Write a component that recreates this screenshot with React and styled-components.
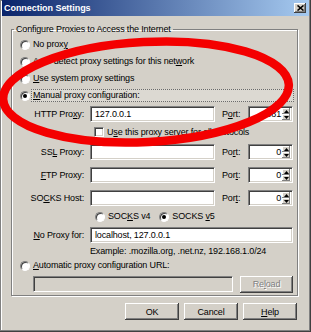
import React from "react";
import styled, { createGlobalStyle } from "styled-components";

const Global = createGlobalStyle`
  html, body { margin: 0; padding: 0; background: #d4d0c8; }
  body {
    font-family: "Liberation Sans", Arial, sans-serif;
    font-size: 9px;
    letter-spacing: -0.15px;
    color: #000;
  }
  * { box-sizing: border-box; }
`;

const Window = styled.div`
  position: relative;
  width: 311px;
  height: 332px;
  background: #d4d0c8;
  display: flex;
  flex-direction: column;
  padding: 0 2px 2px 2px;
  box-shadow: inset -1px -1px 0 #404040, inset -2px -2px 0 #808080,
    inset 1px 1px 0 #808080, inset 2px 2px 0 #ffffff;
  overflow: hidden;
`;

const TitleBar = styled.div`
  height: 16px;
  display: flex;
  align-items: center;
  padding: 0 3px 0 2px;
  background: linear-gradient(to right, #0a246a, #a6caf0);
  color: #fff;
  font-weight: bold;
  letter-spacing: -0.05px;
`;

const Title = styled.span`
  flex: 1;
`;

const CloseBtn = styled.div`
  width: 12px;
  height: 10px;
  background: #d4d0c8;
  display: flex;
  align-items: center;
  justify-content: center;
  box-shadow: inset -1px -1px 0 #404040, inset 1px 1px 0 #ffffff,
    inset -2px -2px 0 #808080;
`;

const Body = styled.div`
  flex: 1;
  display: flex;
  flex-direction: column;
  padding: 8px 11px 0 9px;
`;

const Group = styled.fieldset`
  margin: 0;
  padding: 1px 0 3px 0;
  border: 1px solid #808080;
  box-shadow: 1px 1px 0 #ffffff, inset 1px 1px 0 #ffffff;
  width: 287px;
`;

const Legend = styled.legend`
  margin-left: 2px;
  padding: 0 2px;
  line-height: 11px;
`;

const RadioRow = styled.div`
  display: flex;
  align-items: center;
  height: ${(p) => p.h || 17}px;
  margin-top: ${(p) => p.mt || 0}px;
  padding-left: ${(p) => p.pl ?? 8}px;
`;

const RadioCircle = styled.span`
  position: relative;
  flex: none;
  width: 10px;
  height: 10px;
  border-radius: 50%;
  background: #fff;
  border: 1px solid;
  border-color: #808080 #ffffff #ffffff #808080;
  box-shadow: inset 1px 1px 0 #404040;
  margin-right: 3px;
  margin-left: ${(p) => p.ml || 0}px;
  &::after {
    content: "";
    display: ${(p) => (p.checked ? "block" : "none")};
    position: absolute;
    left: 2px;
    top: 2px;
    width: 4px;
    height: 4px;
    border-radius: 50%;
    background: #000;
  }
`;

const RadioText = styled.span`
  white-space: nowrap;
  line-height: 11px;
  ${(p) =>
    p.focused &&
    `
    flex: 1;
    margin-right: 3px;
    margin-left: -2px;
    padding: 0 1px;
    border: 1px dotted #6b6b6b;
    background: #dcd9d2;
  `}
`;

const Key = styled.span`
  text-decoration: underline;
`;

const FieldRow = styled.div`
  display: flex;
  align-items: center;
  height: 16px;
  margin-top: ${(p) => p.mt || 0}px;
`;

const FieldLabel = styled.span`
  width: 78px;
  flex: none;
  text-align: right;
  padding-right: 6px;
  white-space: nowrap;
`;

const sunken = `
  background: #fff;
  border: 1px solid;
  border-color: #808080 #ffffff #ffffff #808080;
  box-shadow: inset 1px 1px 0 #404040, inset -1px -1px 0 #d4d0c8;
`;

const TextBox = styled.div`
  ${sunken}
  width: ${(p) => p.w}px;
  height: 16px;
  display: flex;
  align-items: center;
  padding: 0 4px;
  white-space: nowrap;
  overflow: hidden;
  ${(p) => p.disabled && `background: #d4d0c8;`}
`;

const PortLabel = styled.span`
  width: 26px;
  margin-left: 7px;
  flex: none;
`;

const PortBox = styled.div`
  ${sunken}
  width: 45px;
  height: 16px;
  display: flex;
  align-items: center;
  padding: 2px 2px 2px 2px;
`;

const PortValue = styled.span`
  flex: 1;
  text-align: right;
  padding-right: 1px;
`;

const Spinner = styled.div`
  width: 8px;
  height: 12px;
  display: flex;
  flex-direction: column;
`;

const SpinBtn = styled.div`
  flex: 1;
  background: #d4d0c8;
  box-shadow: inset -1px -1px 0 #808080, inset 1px 1px 0 #ffffff;
  display: flex;
  align-items: center;
  justify-content: center;
`;

const CheckRow = styled.div`
  display: flex;
  align-items: center;
  height: 20px;
  padding-left: 82px;
`;

const CheckBox = styled.span`
  ${sunken}
  width: 10px;
  height: 10px;
  flex: none;
  margin-right: 3px;
`;

const ExampleRow = styled.div`
  height: 14px;
  display: flex;
  align-items: center;
  padding-left: 78px;
  margin-top: 1px;
`;

const UrlRow = styled.div`
  display: flex;
  align-items: center;
  height: 16px;
  margin-top: 3px;
  padding-left: 21px;
  gap: 7px;
`;

const Button = styled.div`
  width: ${(p) => p.w || 53}px;
  height: 17px;
  display: flex;
  align-items: center;
  justify-content: center;
  background: #d4d0c8;
  box-shadow: inset -1px -1px 0 #404040, inset 1px 1px 0 #ffffff,
    inset -2px -2px 0 #808080;
  color: ${(p) => (p.disabled ? "#808080" : "#000")};
  text-shadow: ${(p) => (p.disabled ? "1px 1px 0 #ffffff" : "none")};
`;

const ButtonRow = styled.div`
  display: flex;
  justify-content: flex-end;
  gap: 5px;
  margin-top: 7px;
  padding-right: 1px;
`;

const Overlay = styled.svg`
  position: absolute;
  left: 0;
  top: 0;
  pointer-events: none;
`;

const Arrow = ({ up }) => (
  <svg width="5" height="3" viewBox="0 0 5 3">
    <path d={up ? "M2.5 0 L5 3 L0 3 Z" : "M0 0 L5 0 L2.5 3 Z"} fill="#000" />
  </svg>
);

const Port = ({ value, label }) => (
  <>
    <PortLabel>{label}</PortLabel>
    <PortBox>
      <PortValue>{value}</PortValue>
      <Spinner>
        <SpinBtn>
          <Arrow up />
        </SpinBtn>
        <SpinBtn>
          <Arrow />
        </SpinBtn>
      </Spinner>
    </PortBox>
  </>
);

export default function App() {
  return (
    <>
      <Global />
      <Window>
        <TitleBar>
          <Title>Connection Settings</Title>
          <CloseBtn>
            <svg width="7" height="6" viewBox="0 0 7 6">
              <path d="M0.5 0.5 L6.5 5.5 M6.5 0.5 L0.5 5.5" stroke="#000" strokeWidth="1.6" />
            </svg>
          </CloseBtn>
        </TitleBar>
        <Body>
          <Group>
            <Legend>Configure Proxies to Access the Internet</Legend>
            <RadioRow>
              <RadioCircle />
              <RadioText>No prox<Key>y</Key></RadioText>
            </RadioRow>
            <RadioRow>
              <RadioCircle />
              <RadioText>Auto-detect proxy settings for this net<Key>w</Key>ork</RadioText>
            </RadioRow>
            <RadioRow>
              <RadioCircle />
              <RadioText><Key>U</Key>se system proxy settings</RadioText>
            </RadioRow>
            <RadioRow>
              <RadioCircle checked />
              <RadioText focused><Key>M</Key>anual proxy configuration:</RadioText>
            </RadioRow>
            <FieldRow mt={2}>
              <FieldLabel>HTTP Pro<Key>x</Key>y:</FieldLabel>
              <TextBox w={125}>127.0.0.1</TextBox>
              <Port label={<>P<Key>o</Key>rt:</>} value="8081" />
            </FieldRow>
            <CheckRow>
              <CheckBox />
              <span>U<Key>s</Key>e this proxy server for all protocols</span>
            </CheckRow>
            <FieldRow mt={2}>
              <FieldLabel>SS<Key>L</Key> Proxy:</FieldLabel>
              <TextBox w={125} />
              <Port label={<>Po<Key>r</Key>t:</>} value="0" />
            </FieldRow>
            <FieldRow mt={7}>
              <FieldLabel><Key>F</Key>TP Proxy:</FieldLabel>
              <TextBox w={125} />
              <Port label={<>Por<Key>t</Key>:</>} value="0" />
            </FieldRow>
            <FieldRow mt={7}>
              <FieldLabel>SO<Key>C</Key>KS Host:</FieldLabel>
              <TextBox w={125} />
              <Port label={<>Por<Key>t</Key>:</>} value="0" />
            </FieldRow>
            <RadioRow h={21} pl={83}>
              <RadioCircle />
              <RadioText>SOC<Key>K</Key>S v4</RadioText>
              <RadioCircle checked ml={9} />
              <RadioText>SOCKS <Key>v</Key>5</RadioText>
            </RadioRow>
            <FieldRow>
              <FieldLabel><Key>N</Key>o Proxy for:</FieldLabel>
              <TextBox w={203}>localhost, 127.0.0.1</TextBox>
            </FieldRow>
            <ExampleRow>Example: .mozilla.org, .net.nz, 192.168.1.0/24</ExampleRow>
            <RadioRow h={15}>
              <RadioCircle />
              <RadioText><Key>A</Key>utomatic proxy configuration URL:</RadioText>
            </RadioRow>
            <UrlRow>
              <TextBox w={200} disabled />
              <Button w={53} disabled>Re<Key>l</Key>oad</Button>
            </UrlRow>
          </Group>
          <ButtonRow>
            <Button w={54}>OK</Button>
            <Button w={54}>Cancel</Button>
            <Button w={54}><Key>H</Key>elp</Button>
          </ButtonRow>
        </Body>
        <Overlay width="311" height="332" viewBox="0 0 311 332">
          <ellipse
            cx="146"
            cy="92"
            rx="143"
            ry="50"
            fill="none"
            stroke="#f40000"
            strokeWidth="8.5"
            transform="rotate(-3 146 92)"
          />
        </Overlay>
      </Window>
    </>
  );
}
